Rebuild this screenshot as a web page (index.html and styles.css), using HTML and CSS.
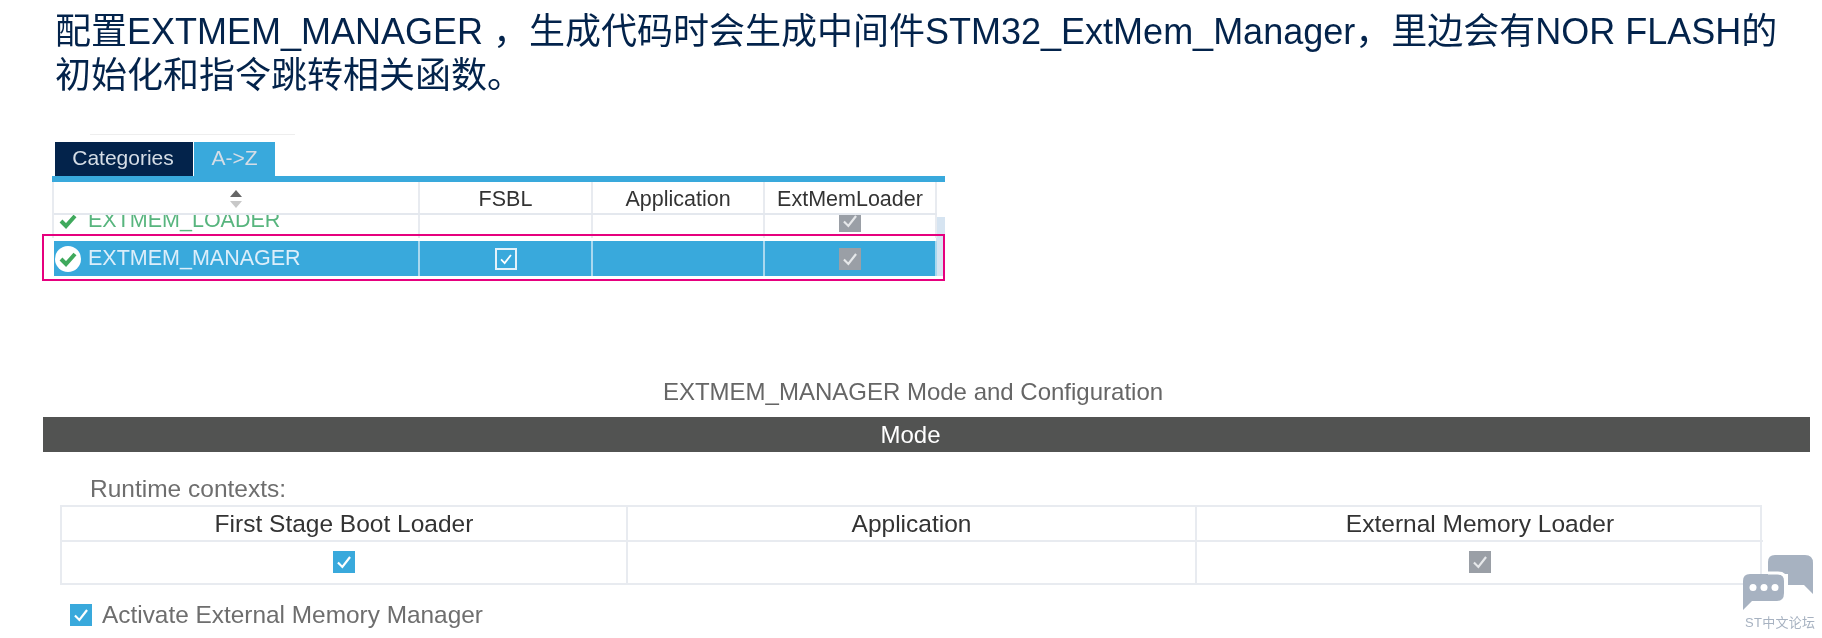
FILE: index.html
```html
<!DOCTYPE html>
<html lang="en">
<head>
  <meta charset="UTF-8">
  <meta name="viewport" content="width=device-width, initial-scale=1.0">
  <title>EXTMEM_MANAGER</title>
  <link rel="stylesheet" href="styles.css">
</head>
<body>
  <svg class="defs" width="0" height="0" aria-hidden="true">
    <symbol id="tick" viewBox="0 0 20 20">
      <path d="M4.5 10.5 8.5 14.5 15.5 5.5" fill="none" stroke="currentColor" stroke-width="2"/>
    </symbol>
  </svg>

  <p class="intro">配置EXTMEM_MANAGER ，生成代码时会生成中间件STM32_ExtMem_Manager，里边会有NOR FLASH的初始化和指令跳转相关函数。</p>

  <!-- Middleware list -->
  <div class="tab-rule"></div>
  <div class="tabs">
    <div class="tab tab-dark">Categories</div>
    <div class="tab tab-active">A-&gt;Z</div>
  </div>
  <div class="list">
    <div class="list-row list-head">
      <div class="cell">
        <svg class="sort" width="14" height="20" viewBox="0 0 14 20">
          <path d="M7 1 13 8H1z" fill="#666"/>
          <path d="M7 19 13 12H1z" fill="#c8c8c8"/>
        </svg>
      </div>
      <div class="cell">FSBL</div>
      <div class="cell">Application</div>
      <div class="cell">ExtMemLoader</div>
    </div>
    <div class="clip">
      <div class="list-row list-loader">
        <div class="cell cell-name">
          <svg class="status" width="26" height="26" viewBox="0 0 26 26">
            <path d="M6 13 11 18 20 8" fill="none" stroke="#3fa95c" stroke-width="4"/>
          </svg>
          EXTMEM_LOADER
        </div>
        <div class="cell"></div>
        <div class="cell"></div>
        <div class="cell"><svg class="box box-grey"><use href="#tick"/></svg></div>
      </div>
    </div>
    <div class="list-row list-selected">
      <div class="cell cell-name">
        <svg class="status" width="26" height="26" viewBox="0 0 26 26">
          <circle cx="13" cy="13" r="13" fill="#fff"/>
          <path d="M6 13 11 18 20 8" fill="none" stroke="#3fa95c" stroke-width="4"/>
        </svg>
        EXTMEM_MANAGER
      </div>
      <div class="cell"><svg class="box box-outline"><use href="#tick"/></svg></div>
      <div class="cell"></div>
      <div class="cell"><svg class="box box-grey"><use href="#tick"/></svg></div>
    </div>
    <div class="highlight"></div>
  </div>

  <!-- Mode panel -->
  <div class="panel-title">EXTMEM_MANAGER Mode and Configuration</div>
  <div class="mode-bar">Mode</div>
  <div class="runtime-label">Runtime contexts:</div>
  <div class="contexts">
    <div class="ctx ctx-head">First Stage Boot Loader</div>
    <div class="ctx ctx-head">Application</div>
    <div class="ctx ctx-head">External Memory Loader</div>
    <div class="ctx ctx-check"><svg class="box box-blue"><use href="#tick"/></svg></div>
    <div class="ctx ctx-check"></div>
    <div class="ctx ctx-check"><svg class="box box-grey"><use href="#tick"/></svg></div>
  </div>
  <div class="activate">
    <svg class="box box-blue"><use href="#tick"/></svg>
    <span>Activate External Memory Manager</span>
  </div>

  <!-- Forum watermark -->
  <div class="watermark">
    <svg width="70" height="56" viewBox="0 0 70 56">
      <path d="M25 8Q25 1 32 1H62Q70 1 70 9V40L61 31H45V20H25z" fill="#a7b2c1"/>
      <path d="M0 36V27Q0 20 7 20H34Q41 20 41 27V39Q41 47 34 47H9L0 56z" fill="#a7b2c1"/>
      <path d="M25 19H35Q43 19 43 27V31" fill="none" stroke="#fff" stroke-width="3"/>
      <circle cx="10" cy="33.500" r="3.500" fill="#fff"/>
      <circle cx="21" cy="33.500" r="3.500" fill="#fff"/>
      <circle cx="32" cy="33.500" r="3.500" fill="#fff"/>
    </svg>
    <div class="watermark-text">ST中文论坛</div>
  </div>
</body>
</html>
```

FILE: styles.css
```css
body {
  margin: 0;
  background: #fff;
  font-family: "Liberation Sans", "Noto Sans CJK SC", sans-serif;
  color: #333;
  height: 638px;
  overflow: hidden;
  position: relative;
  filter: blur(0.4px);
}
.defs {
  position: absolute;
}
.intro {
  margin: 10px 30px 0 55px;
  font-size: 36px;
  line-height: 44px;
  color: #03234b;
}

/* middleware list */
.tab-rule {
  margin: 36px 0 0 90px;
  width: 205px;
  height: 1px;
  background: #eee;
}
.tabs {
  display: flex;
  gap: 1px;
  margin: 7px 0 0 55px;
  height: 34px;
}
.tab {
  font-size: 21px;
  line-height: 32px;
  color: #d5dde6;
  text-align: center;
}
.tab-dark {
  width: 138px;
  padding-right: 2px;
  box-sizing: border-box;
  background: #03234b;
}
.tab-active {
  width: 81px;
  background: #39a9dc;
}
.list {
  position: relative;
  width: 893px;
  margin-left: 52px;
  border-top: 6px solid #39a9dc;
  background: linear-gradient(#d6e4f1, #d6e4f1) no-repeat right 35px / 9px 60px;
}
.list-row {
  display: grid;
  grid-template-columns: 366px 173px 172px 172px;
  margin-left: 2px;
  width: 883px;
  font-size: 21.500px;
}
.cell {
  display: flex;
  align-items: center;
  justify-content: center;
  border-right: 2px solid #e8ebf0;
}
.cell-name {
  justify-content: flex-start;
  gap: 7px;
  padding-left: 1px;
}
.list-head {
  height: 33px;
  box-sizing: border-box;
  border-bottom: 2px solid #e4e8ee;
  background: #fff;
  box-shadow: -2px 0 0 #e8ebf0;
}
.list-head .cell {
  padding-top: 3px;
}
.clip {
  height: 26px;
  overflow: hidden;
}
.list-loader {
  height: 35px;
  margin-top: -12px;
  color: #58b57e;
  box-shadow: -2px 0 0 #e8ebf0;
}
.list-selected {
  height: 35px;
  background: #39a9dc;
  color: #dceefa;
}
.list-selected .cell {
  border-right-color: #a9d8ef;
}
.highlight {
  position: absolute;
  left: -10px;
  top: 52px;
  width: 899px;
  height: 43px;
  border: 2px solid #e6007e;
}

/* check boxes */
.box {
  width: 22px;
  height: 22px;
  display: block;
}
.box-grey {
  background: #9a9fa6;
  color: #e6e8ea;
}
.box-blue {
  background: #39a9dc;
  color: #fff;
}
.box-outline {
  border: 2px solid #e4f2fa;
  box-sizing: border-box;
  color: #fff;
}

/* mode panel */
.panel-title {
  margin-top: 101px;
  height: 40px;
  width: 1826px;
  text-align: center;
  font-size: 24px;
  line-height: 30px;
  color: #666;
}
.mode-bar {
  margin: 0 12px 0 43px;
  height: 35px;
  padding-right: 32px;
  background: #525352;
  color: #fff;
  font-size: 24px;
  line-height: 35px;
  text-align: center;
}
.runtime-label {
  margin: 22px 0 0 90px;
  font-size: 24.500px;
  line-height: 30px;
  color: #6e6e6e;
}
.contexts {
  display: grid;
  grid-template-columns: 566px 569px 566px;
  grid-template-rows: 35px 41px;
  width: 1702px;
  margin: 1px 0 0 60px;
  border: 2px solid #e8ebf0;
  box-sizing: border-box;
}
.ctx {
  display: flex;
  align-items: center;
  justify-content: center;
  border-right: 2px solid #e8ebf0;
  font-size: 24.500px;
}
.ctx:nth-child(3n) {
  border-right: 0;
}
.ctx-head {
  border-bottom: 2px solid #e8ebf0;
}
.ctx-check {
  padding-bottom: 2px;
}
.activate {
  display: flex;
  align-items: center;
  gap: 10px;
  margin: 16px 0 0 70px;
  font-size: 24.400px;
  color: #6e6e6e;
}

/* watermark */
.watermark {
  position: absolute;
  left: 1743px;
  top: 554px;
  width: 70px;
}
.watermark svg {
  display: block;
}
.watermark-text {
  margin: 5px 0 0 2px;
  font-size: 13px;
  letter-spacing: 0.3px;
  line-height: 16px;
  white-space: nowrap;
  color: #a7b2c1;
}
```
